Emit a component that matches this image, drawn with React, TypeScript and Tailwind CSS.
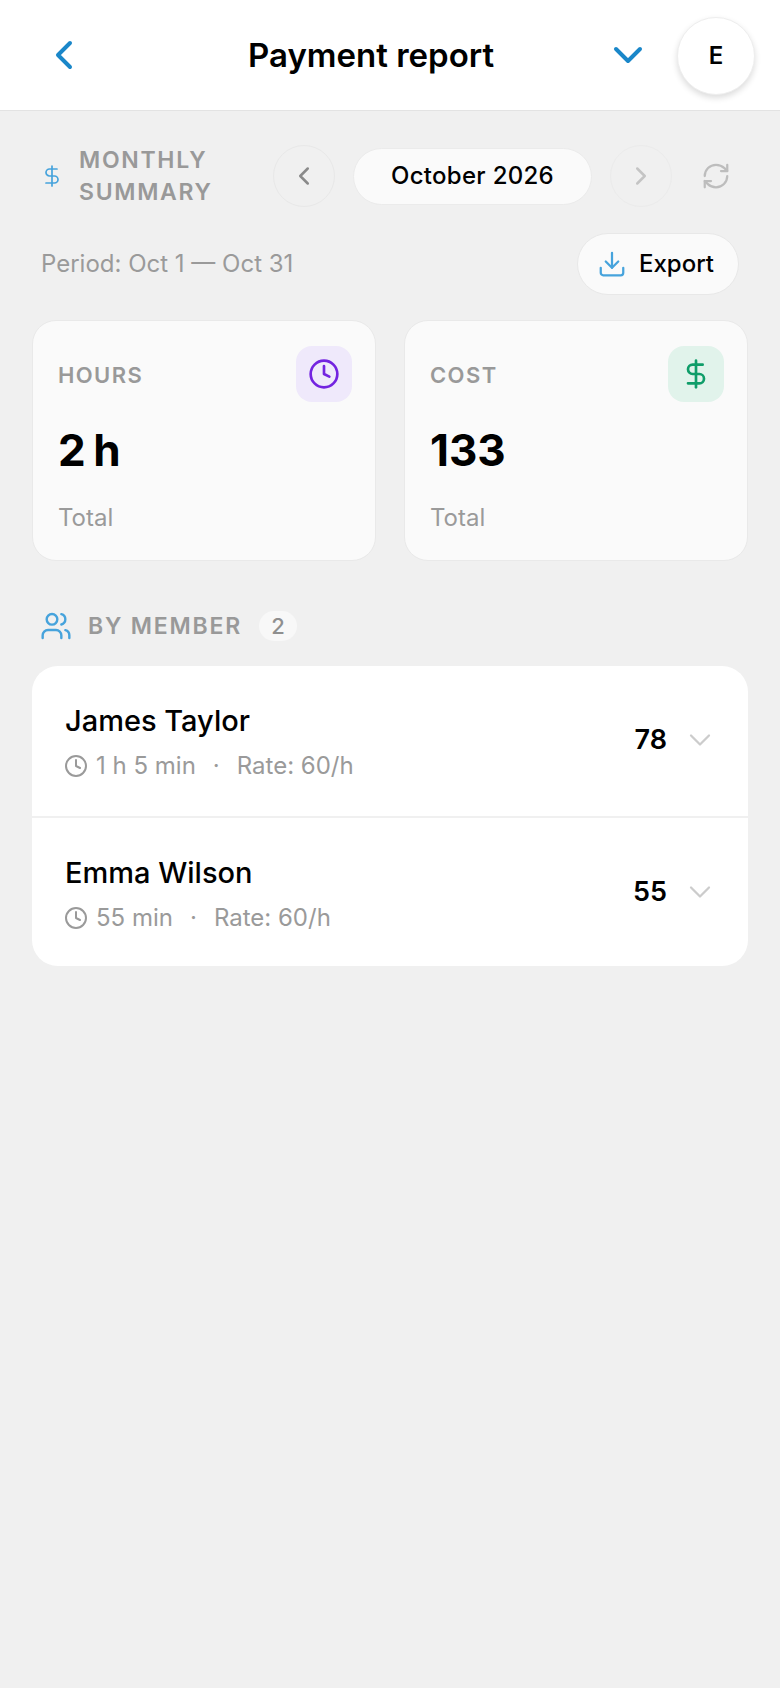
import { ChevronDown, ChevronLeft, ChevronRight, Clock, DollarSign, Download, RefreshCw, Users } from "lucide-react";

const members = [
  { name: "James Taylor", time: "1 h 5 min", rate: "Rate: 60/h", total: "78", rowClass: "pt-[2px]" },
  { name: "Emma Wilson", time: "55 min", rate: "Rate: 60/h", total: "55", rowClass: "border-t-2 border-[#f0f0f0] pt-[4px]" },
];

const App = () => {
  return (
    <div className="min-h-[1688px] bg-[#f0f0f0] font-['Inter',sans-serif] text-black">
      {/* Header */}
      <header className="flex h-[111px] items-center border-b border-[#e3e3e3] bg-white pr-[24px] pl-[40px]">
        <ChevronLeft className="h-[48px] w-[48px] text-[#1a87c9]" strokeWidth={2} />
        <h1 className="ml-[160px] w-[246px] text-[33px] leading-none font-semibold whitespace-nowrap">Payment report</h1>
        <ChevronDown className="ml-[110px] h-[48px] w-[48px] text-[#1a87c9]" strokeWidth={2} />
        <div className="mt-[1px] ml-[25px] flex h-[78px] w-[78px] items-center justify-center rounded-full border border-[#eeeeee] bg-white text-[24px] font-semibold shadow-[0_3px_6px_rgba(0,0,0,0.14)]">
          E
        </div>
      </header>

      <main className="px-[32px]">
        {/* Month picker */}
        <div className="mt-[33px] flex items-center">
          <DollarSign className="ml-[8px] h-[24px] w-[24px] text-[#46a3dc]" strokeWidth={1.7} />
          <div className="ml-[15px] w-[194px] text-[23px] leading-[32px] font-semibold tracking-[1.7px] text-[#999999]">
            MONTHLY SUMMARY
          </div>
          <button className="flex h-[62px] w-[62px] items-center justify-center rounded-full border border-[#e8e8e8] text-[#8a8a8a]">
            <ChevronLeft className="h-[30px] w-[30px]" strokeWidth={2} />
          </button>
          <div className="ml-[18px] flex h-[57px] w-[239px] items-center justify-center rounded-full border border-[#ebebeb] bg-[#fafafa] text-[24px] font-medium tracking-[0.3px]">
            October 2026
          </div>
          <button className="ml-[18px] flex h-[62px] w-[62px] items-center justify-center rounded-full border border-[#ebebeb] text-[#c4c4c4]">
            <ChevronRight className="h-[30px] w-[30px]" strokeWidth={2} />
          </button>
          <RefreshCw className="ml-[29px] h-[30px] w-[30px] text-[#bdbdbd]" strokeWidth={1.8} />
        </div>

        {/* Period and export */}
        <div className="mt-[25px] flex items-center justify-between px-[9px]">
          <span className="text-[24px] text-[#9a9a9a]">Period: Oct 1 — Oct 31</span>
          <button className="flex h-[62px] w-[162px] items-center gap-[12px] rounded-full border border-[#e8e8e8] bg-[#fafafa] pl-[19px] text-[24px] font-medium">
            <Download className="h-[30px] w-[30px] text-[#46a3dc]" strokeWidth={1.8} />
            Export
          </button>
        </div>

        {/* Totals */}
        <div className="mt-[25px] grid grid-cols-2 gap-[28px]">
          <div className="h-[241px] rounded-[24px] border border-[#e9e9e9] bg-[#fafafa] pt-[25px] pr-[23px] pl-[25px]">
            <div className="flex items-start justify-between">
              <span className="mt-[16px] text-[22px] leading-[26px] font-semibold tracking-[1.4px] text-[#999999]">HOURS</span>
              <div className="flex h-[56px] w-[56px] items-center justify-center rounded-[16px] bg-[#efe9fb]">
                <Clock className="h-[32px] w-[32px] text-[#7323e0]" strokeWidth={2} />
              </div>
            </div>
            <div className="mt-[22px] text-[44px] leading-[52px] font-bold [word-spacing:-3px]">2 h</div>
            <div className="mt-[27px] text-[24px] leading-[30px] text-[#9a9a9a]">Total</div>
          </div>
          <div className="h-[241px] rounded-[24px] border border-[#e9e9e9] bg-[#fafafa] pt-[25px] pr-[23px] pl-[25px]">
            <div className="flex items-start justify-between">
              <span className="mt-[16px] text-[22px] leading-[26px] font-semibold tracking-[1.4px] text-[#999999]">COST</span>
              <div className="flex h-[56px] w-[56px] items-center justify-center rounded-[16px] bg-[#e1f3eb]">
                <DollarSign className="h-[32px] w-[32px] text-[#0f9d69]" strokeWidth={2} />
              </div>
            </div>
            <div className="mt-[22px] text-[44px] leading-[52px] font-bold">133</div>
            <div className="mt-[27px] text-[24px] leading-[30px] text-[#9a9a9a]">Total</div>
          </div>
        </div>

        {/* Members */}
        <div className="mt-[48px] flex items-center pl-[8px]">
          <Users className="h-[32px] w-[32px] text-[#46a3dc]" strokeWidth={1.8} />
          <span className="ml-[16px] text-[23px] font-semibold tracking-[1.8px] text-[#999999]">BY MEMBER</span>
          <span className="ml-[17px] flex h-[30px] w-[38px] items-center justify-center rounded-full bg-[#f8f8f8] text-[22px] font-medium text-[#8f8f8f]">
            2
          </span>
        </div>

        <div className="mt-[22px] overflow-hidden rounded-[26px] bg-white">
          {members.map((m) => (
            <div key={m.name} className={`flex h-[150px] items-center justify-between pr-[30px] pl-[33px] ${m.rowClass}`}>
              <div>
                <div className="text-[29px] leading-[36px] font-medium">{m.name}</div>
                <div className="mt-[12px] flex items-center text-[24px] leading-[30px] text-[#9a9a9a]">
                  <Clock className="mr-[8px] -ml-[1px] h-[24px] w-[24px]" strokeWidth={2} />
                  <span>{m.time}</span>
                  <span className="mx-[17px]">·</span>
                  <span>{m.rate}</span>
                </div>
              </div>
              <div className="mb-[3px] flex items-center gap-[15px]">
                <span className="text-[27px] font-semibold">{m.total}</span>
                <ChevronDown className="h-[36px] w-[36px] text-[#cccccc]" strokeWidth={1.5} />
              </div>
            </div>
          ))}
        </div>
      </main>
    </div>
  );
};

export default App;
